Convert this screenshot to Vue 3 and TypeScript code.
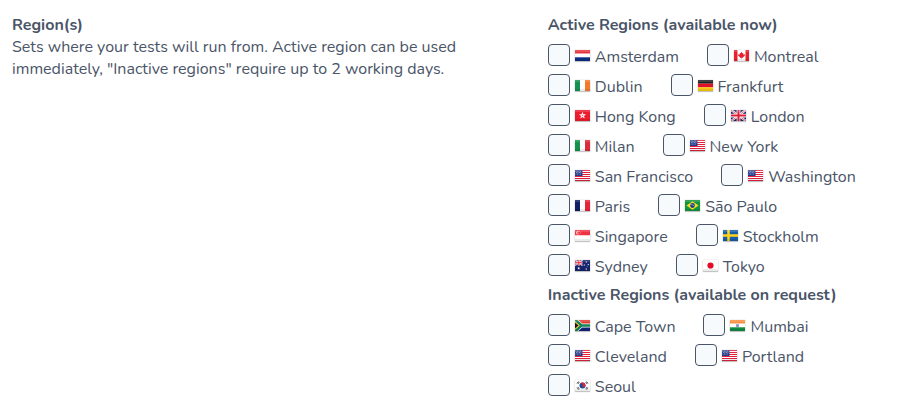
<script setup lang="ts">
import { ref } from 'vue'

interface Shape {
  d: string
  fill?: string
  stroke?: string
  width?: number
}

interface Region {
  name: string
  flag: string
}

interface Group {
  title: string
  regions: Region[]
}

// Flags are drawn on a 30 x 22 grid.
const rect = (x: number, y: number, w: number, h: number, fill: string): Shape => ({
  d: `M${x} ${y}h${w}v${h}h${-w}z`,
  fill,
})

const circle = (cx: number, cy: number, r: number, fill: string): Shape => ({
  d: `M${cx - r} ${cy}a${r} ${r} 0 1 0 ${2 * r} 0a${r} ${r} 0 1 0 ${-2 * r} 0z`,
  fill,
})

const line = (d: string, stroke: string, width: number): Shape => ({ d, stroke, width })

const star = (cx: number, cy: number, r: number, fill: string): Shape => {
  const points = Array.from({ length: 10 }, (_, i) => {
    const radius = i % 2 === 0 ? r : r * 0.42
    const angle = (Math.PI * i) / 5 - Math.PI / 2
    return `${(cx + radius * Math.cos(angle)).toFixed(2)} ${(cy + radius * Math.sin(angle)).toFixed(2)}`
  })
  return { d: `M${points.join('L')}z`, fill }
}

const bars = (a: string, b: string, c: string): Shape[] => [
  rect(0, 0, 10, 22, a),
  rect(10, 0, 10, 22, b),
  rect(20, 0, 10, 22, c),
]

const bands = (a: string, b: string, c: string): Shape[] => [
  rect(0, 0, 30, 7.4, a),
  rect(0, 7.3, 30, 7.4, b),
  rect(0, 14.6, 30, 7.4, c),
]

const usStars: Shape[] = [2, 5, 8].flatMap((y, row) =>
  [2, 5, 8, 11].map((x) => circle(x + (row % 2), y, 0.8, '#fff')),
)

const flags: Record<string, Shape[]> = {
  nl: bands('#e8323c', '#ffffff', '#0b2f82'),
  ie: bars('#149153', '#ffffff', '#f47a2b'),
  it: bars('#14924b', '#ffffff', '#dc2b39'),
  fr: bars('#121f63', '#ffffff', '#e5233b'),
  de: bands('#222222', '#e3122b', '#fbc813'),
  ca: [
    rect(0, 0, 30, 22, '#ffffff'),
    rect(0, 0, 7, 22, '#e5202f'),
    rect(23, 0, 7, 22, '#e5202f'),
    {
      d: 'M15 3.5l1.8 3 1.7-.7-.6 3.7 2.4-1.5.5 1.3 1.4-.2-.8 2.4-3.9 3.3.2 1-2.3-.4v3h-.8v-3l-2.3.4.2-1-3.9-3.3-.8-2.4 1.4.2.5-1.3 2.4 1.5-.6-3.7 1.7.7z',
      fill: '#e5202f',
    },
  ],
  hk: [
    rect(0, 0, 30, 22, '#ec1b2e'),
    star(15, 11, 7.5, '#ffffff'),
    circle(15, 11, 1.2, '#f3616c'),
    line('M15 11l1-3.6M15 11l3.2-1M15 11l1.5 3M15 11l-2.5 2.6M15 11l-3.2-1.6', '#f3616c', 0.6),
  ],
  gb: [
    rect(0, 0, 30, 22, '#15246c'),
    line('M0 0L30 22M30 0L0 22', '#ffffff', 4.4),
    line('M0 0L30 22M30 0L0 22', '#e02038', 1.4),
    line('M15 0V22M0 11H30', '#ffffff', 7.5),
    line('M15 0V22M0 11H30', '#e02038', 4.2),
  ],
  us: [
    rect(0, 0, 30, 22, '#ffffff'),
    ...[0, 4, 8, 12, 16, 20].map((y) => rect(0, y, 30, 2, '#e3213c')),
    rect(0, 0, 15, 12, '#263a87'),
    ...usStars,
  ],
  br: [
    rect(0, 0, 30, 22, '#12953f'),
    { d: 'M15 2.5L27 11 15 19.5 3 11z', fill: '#fbdc22' },
    circle(15, 11, 4.8, '#173d88'),
    line('M10.7 9.4c3-.7 6.5.5 8.4 3.3', '#ffffff', 1),
  ],
  sg: [
    rect(0, 0, 30, 11, '#ef3340'),
    rect(0, 11, 30, 11, '#ffffff'),
    circle(6, 5.5, 3.6, '#ffffff'),
    circle(7.5, 5.5, 3.2, '#ef3340'),
    ...[[9, 3], [11, 5], [7.4, 5], [10.2, 7.5], [8, 7.5]].map(([x, y]) => circle(x, y, 0.6, '#ffffff')),
  ],
  se: [
    rect(0, 0, 30, 22, '#145fa8'),
    line('M11 0V22M0 11H30', '#ffd21c', 5),
  ],
  au: [
    rect(0, 0, 30, 22, '#15246c'),
    line('M0 0L15 11M15 0L0 11', '#ffffff', 2.6),
    line('M0 0L15 11M15 0L0 11', '#e02038', 1),
    line('M7.5 0V11M0 5.5H15', '#ffffff', 3.8),
    line('M7.5 0V11M0 5.5H15', '#e02038', 2),
    star(7.5, 16.6, 3, '#ffffff'),
    star(22.5, 4, 2, '#ffffff'),
    star(18.5, 10, 2, '#ffffff'),
    star(26.5, 9, 2, '#ffffff'),
    star(22.5, 18, 2.2, '#ffffff'),
    circle(24.2, 12.4, 0.8, '#ffffff'),
  ],
  jp: [rect(0, 0, 30, 22, '#ffffff'), circle(15, 11, 6.2, '#e60b24')],
  za: [
    rect(0, 0, 30, 11, '#e23a31'),
    rect(0, 11, 30, 11, '#14237c'),
    line('M0-1L13 11H30M0 23L13 11', '#ffffff', 7.6),
    line('M0-1L13 11H30M0 23L13 11', '#138253', 5.2),
    { d: 'M0 3.2L9.4 11 0 18.8z', fill: '#f7b718' },
    { d: 'M0 5.4L6.8 11 0 16.6z', fill: '#161616' },
  ],
  in: [
    ...bands('#fa8f3e', '#ffffff', '#128a42'),
    circle(15, 11, 3, '#5160a6'),
    circle(15, 11, 2.1, '#ffffff'),
    line('M15 8.3V13.7M12.3 11H17.7M13.1 9.1L16.9 12.9M16.9 9.1L13.1 12.9', '#5160a6', 0.5),
  ],
  kr: [
    rect(0, 0, 30, 22, '#ffffff'),
    circle(15, 11, 6, '#174a9b'),
    { d: 'M9.3 9A6 6 0 0 1 21 11a3 3 0 0 1-6 0 3 3 0 0 0-5.7-2z', fill: '#e22435' },
    line('M4 7L7 2.8M5.8 8L8.8 3.8', '#333333', 1.6),
    line('M21.2 3.8L24.2 8M23 2.8L26 7', '#333333', 1.6),
    line('M4 15L7 19.2M5.8 14L8.8 18.2', '#333333', 1.6),
    line('M21.2 18.2L24.2 14M23 19.2L26 15', '#333333', 1.6),
  ],
}

// Light falling on every flag: a bright top edge and a shaded bottom edge.
const gloss: Shape[] = [
  rect(0, 0, 30, 4, 'rgba(255, 255, 255, 0.15)'),
  rect(0, 18, 30, 4, 'rgba(0, 0, 0, 0.08)'),
]

const groups: Group[] = [
  {
    title: 'Active Regions (available now)',
    regions: [
      { name: 'Amsterdam', flag: 'nl' },
      { name: 'Montreal', flag: 'ca' },
      { name: 'Dublin', flag: 'ie' },
      { name: 'Frankfurt', flag: 'de' },
      { name: 'Hong Kong', flag: 'hk' },
      { name: 'London', flag: 'gb' },
      { name: 'Milan', flag: 'it' },
      { name: 'New York', flag: 'us' },
      { name: 'San Francisco', flag: 'us' },
      { name: 'Washington', flag: 'us' },
      { name: 'Paris', flag: 'fr' },
      { name: 'São Paulo', flag: 'br' },
      { name: 'Singapore', flag: 'sg' },
      { name: 'Stockholm', flag: 'se' },
      { name: 'Sydney', flag: 'au' },
      { name: 'Tokyo', flag: 'jp' },
    ],
  },
  {
    title: 'Inactive Regions (available on request)',
    regions: [
      { name: 'Cape Town', flag: 'za' },
      { name: 'Mumbai', flag: 'in' },
      { name: 'Cleveland', flag: 'us' },
      { name: 'Portland', flag: 'us' },
      { name: 'Seoul', flag: 'kr' },
    ],
  },
]

const selected = ref<string[]>([])
</script>

<template>
  <section class="field">
    <div class="intro">
      <h2 class="heading">Region(s)</h2>
      <p class="help">
        Sets where your tests will run from. Active region can be used immediately, "Inactive
        regions" require up to 2 working days.
      </p>
    </div>

    <div class="groups">
      <fieldset v-for="group in groups" :key="group.title" class="group">
        <legend class="legend">{{ group.title }}</legend>
        <div class="options">
          <label v-for="region in group.regions" :key="region.name" class="option">
            <input v-model="selected" class="box" type="checkbox" :value="region.name" />
            <svg class="flag" viewBox="0 0 30 22" aria-hidden="true">
              <path
                v-for="(shape, i) in [...flags[region.flag], ...gloss]"
                :key="i"
                :d="shape.d"
                :fill="shape.fill ?? 'none'"
                :stroke="shape.stroke"
                :stroke-width="shape.width"
              />
            </svg>
            <span class="name">{{ region.name }}</span>
          </label>
        </div>
      </fieldset>
    </div>
  </section>
</template>

<style>
body {
  margin: 0;
  background: #fff;
}
</style>

<style scoped>
.field {
  display: grid;
  grid-template-columns: 3fr 2fr;
  gap: 15px;
  padding: 10px 12px 0;
  color: #4a5568;
  font-family: Nunito, Lato, sans-serif;
  font-size: 16px;
  line-height: 22px;
}

.intro {
  padding-top: 4px;
}

.heading {
  margin: 0;
  font-size: 16px;
  font-weight: 700;
}

.help {
  max-width: 460px;
  margin: 0;
}

.group {
  min-width: 0;
  margin: 0;
  padding: 0;
  border: 0;
}

.legend {
  padding: 0;
  font-weight: 700;
  line-height: 30px;
}

.options {
  display: flex;
  flex-wrap: wrap;
  column-gap: 28px;
}

.option {
  display: flex;
  align-items: center;
  height: 30px;
  cursor: pointer;
}

.box {
  appearance: none;
  box-sizing: border-box;
  width: 22px;
  height: 22px;
  margin: 0 5px 0 0;
  border: 1px solid #4a5568;
  border-radius: 4px;
  background: #f7fafc;
}

.box:checked {
  background: #4a5568;
  box-shadow: inset 0 0 0 4px #f7fafc;
}

.flag {
  width: 15px;
  height: 11px;
  margin: 1px 5px 0 0;
  box-shadow: 0 1px 1px rgba(0, 0, 0, 0.2), 0 0 1px rgba(0, 0, 0, 0.25);
}

.name {
  padding-top: 3px;
}
</style>
